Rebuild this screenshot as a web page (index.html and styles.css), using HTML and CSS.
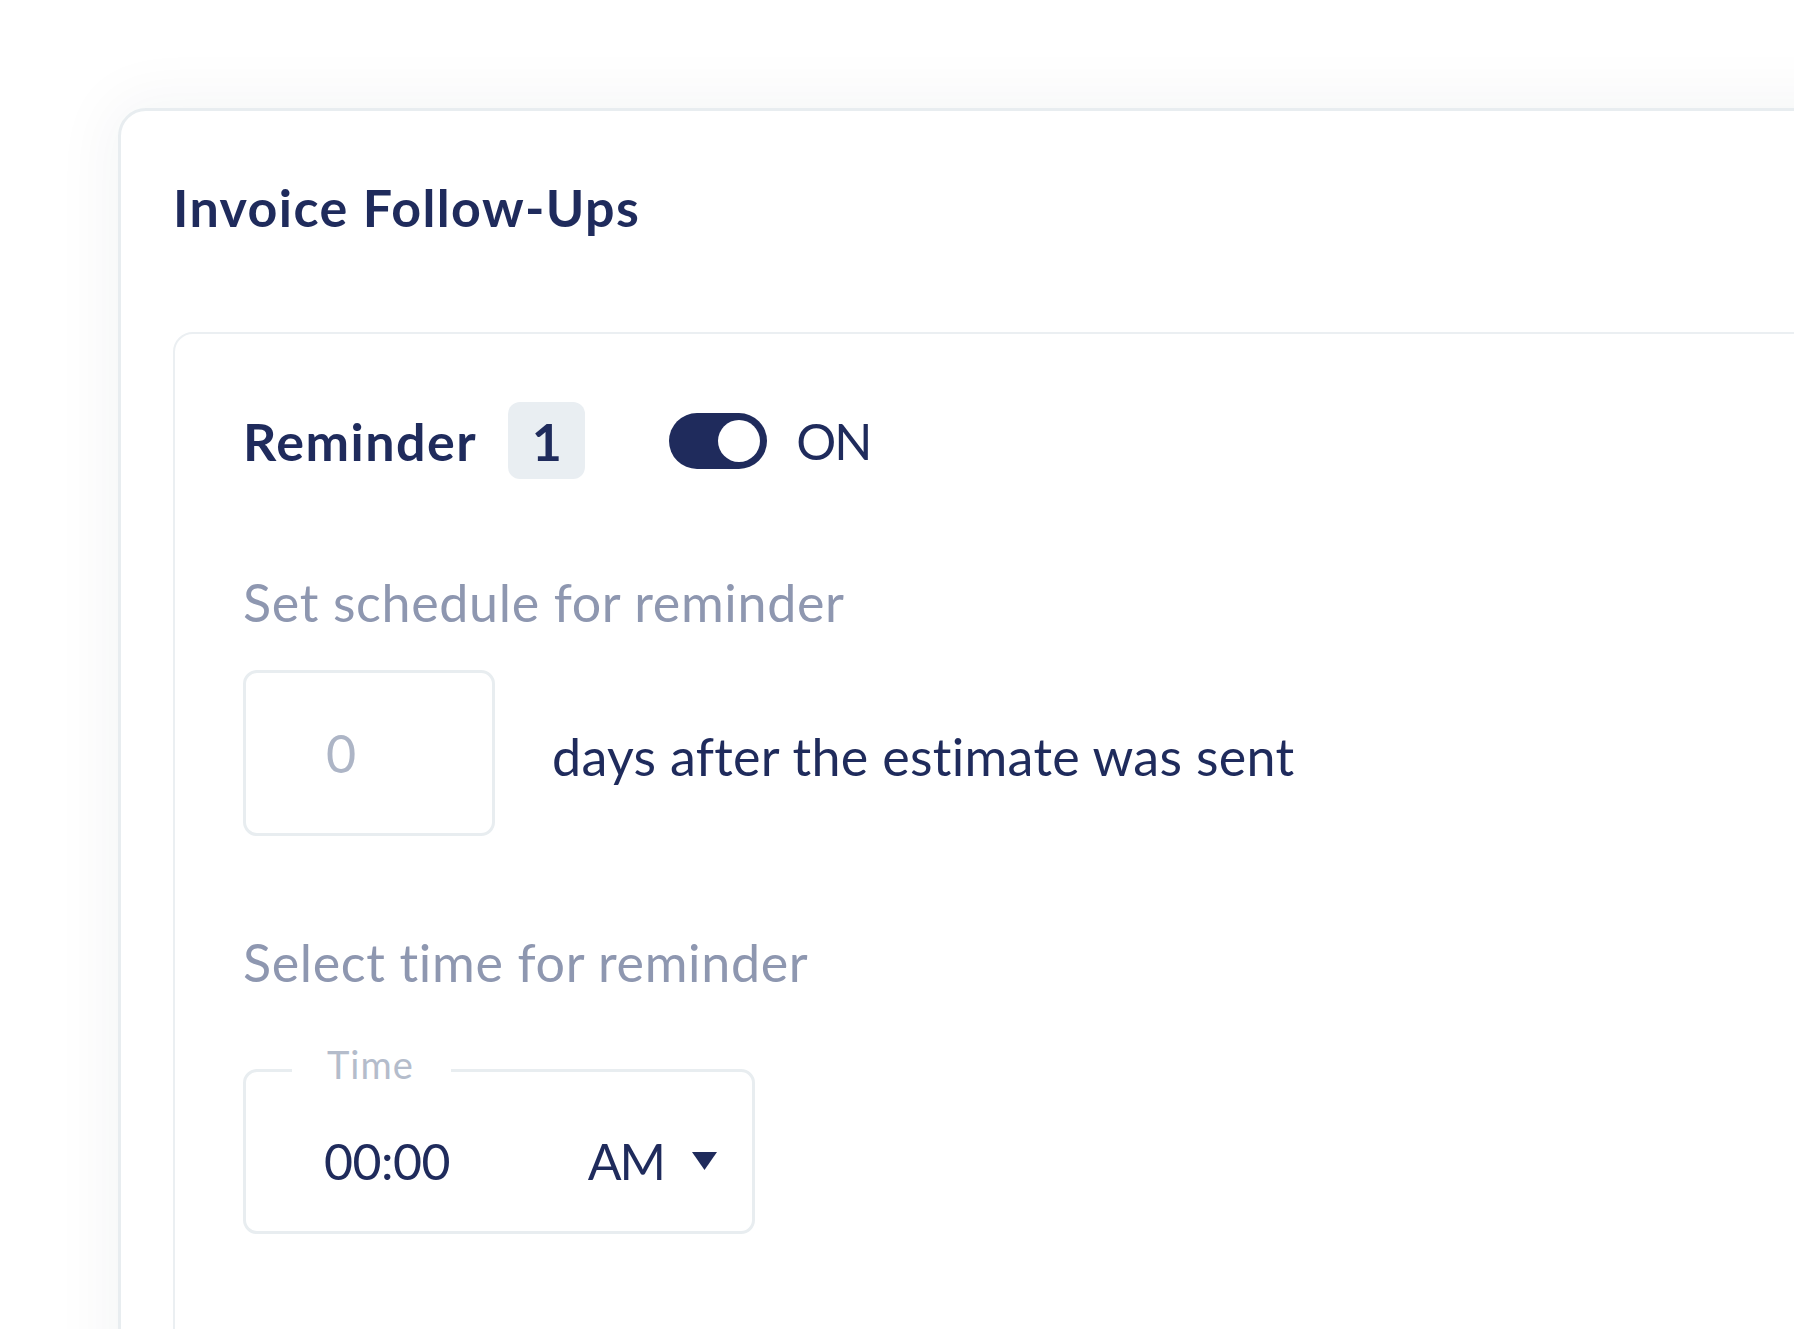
FILE: index.html
```html
<!DOCTYPE html>
<html lang="en">
<head>
    <meta charset="UTF-8">
    <meta name="viewport" content="width=device-width, initial-scale=1.0">
    <title>Invoice Follow-Ups</title>
    <link rel="stylesheet" href="styles.css">
</head>
<body>
    <div class="page">
        <section class="card">
            <h1 class="card-title">Invoice Follow-Ups</h1>

            <!-- Reminder block -->
            <div class="reminder">
                <div class="reminder-head">
                    <span class="reminder-label">Reminder</span>
                    <span class="reminder-num">1</span>
                    <label class="toggle">
                        <span class="toggle-track"><span class="toggle-knob"></span></span>
                        <span class="toggle-text">ON</span>
                    </label>
                </div>

                <p class="field-label">Set schedule for reminder</p>
                <div class="schedule-row">
                    <input class="days-input" type="text" placeholder="0">
                    <span class="schedule-text">days after the estimate was sent</span>
                </div>

                <p class="field-label time-label">Select time for reminder</p>
                <div class="time-field">
                    <span class="time-legend">Time</span>
                    <span class="time-value">00:00</span>
                    <span class="time-period">
                        <span class="time-ampm">AM</span>
                        <svg class="caret" width="25" height="18" viewBox="0 0 25 18"><path d="M0 0H25L12.5 18Z" fill="#1f2b5c"/></svg>
                    </span>
                </div>
            </div>
        </section>
    </div>
</body>
</html>
```

FILE: styles.css
```css
/* General Styles */
* {
    box-sizing: border-box;
}

body {
    margin: 0;
    background: #fff;
    font-family: Lato, "Noto Sans", sans-serif;
    color: #1f2b5c;
}

.page {
    width: 100vw;
    height: 100vh;
    overflow: hidden;
    padding: 108px 0 0 118px;
}

/* Outer card */
.card {
    width: 1800px;
    min-height: 1400px;
    background: #fff;
    border: 3px solid #e8edf0;
    border-radius: 28px;
    padding: 70px 0 0 52px;
    box-shadow: 0 0 60px 12px rgba(30, 45, 80, 0.045);
}

.card-title {
    margin: 0 0 99px;
    font-size: 52px;
    line-height: 52px;
    font-weight: 700;
    letter-spacing: 1.4px;
}

/* Inner reminder card */
.reminder {
    min-height: 1100px;
    border: 2px solid #ebeff2;
    border-radius: 20px;
    padding: 68px 0 0 68px;
}

.reminder-head {
    display: flex;
    align-items: center;
    height: 77px;
}

.reminder-label {
    font-size: 52px;
    line-height: 52px;
    font-weight: 700;
    letter-spacing: 1.5px;
}

.reminder-num {
    display: flex;
    align-items: center;
    justify-content: center;
    width: 77px;
    height: 77px;
    margin-left: 31px;
    border-radius: 12px;
    background: #e9eef2;
    font-size: 52px;
    font-weight: 700;
}

.toggle {
    display: flex;
    align-items: center;
    margin-left: 84px;
}

.toggle-track {
    display: flex;
    justify-content: flex-end;
    align-items: center;
    width: 98px;
    height: 56px;
    padding: 7px;
    border-radius: 28px;
    background: #1f2b5c;
}

.toggle-knob {
    width: 42px;
    height: 42px;
    border-radius: 50%;
    background: #fff;
}

.toggle-text {
    margin-left: 29px;
    font-size: 50px;
    line-height: 52px;
    letter-spacing: -2px;
}

/* Labels */
.field-label {
    margin: 97px 0 0;
    font-size: 52px;
    line-height: 52px;
    letter-spacing: 0.65px;
    color: #8e97b0;
}

.time-label {
    margin-top: 100px;
}

/* Schedule row */
.schedule-row {
    display: flex;
    align-items: center;
    margin-top: 42px;
}

.days-input {
    width: 252px;
    height: 166px;
    padding: 0 0 0 80px;
    border: 3px solid #e8edf0;
    border-radius: 14px;
    font-family: inherit;
    font-size: 52px;
    color: #1f2b5c;
    background: #fff;
    outline: none;
}

.days-input::placeholder {
    color: #adb5c6;
}

.schedule-text {
    margin: 6px 0 0 57px;
    font-size: 52px;
    line-height: 52px;
    letter-spacing: 0.3px;
}

/* Time select */
.time-field {
    position: relative;
    display: flex;
    align-items: center;
    justify-content: space-between;
    width: 512px;
    height: 165px;
    margin-top: 81px;
    padding: 19px 35px 0 78px;
    border: 3px solid #e8edf0;
    border-radius: 14px;
}

.time-legend {
    position: absolute;
    top: -27px;
    left: 46px;
    padding: 0 37px 0 35px;
    background: #fff;
    font-size: 38px;
    line-height: 38px;
    letter-spacing: 1px;
    color: #b4bccb;
}

.time-value,
.time-period {
    font-size: 52px;
    line-height: 52px;
}

.time-value {
    font-size: 50px;
    letter-spacing: -0.5px;
}

.time-period {
    display: flex;
    align-items: center;
    gap: 28px;
}

.time-ampm {
    font-size: 50px;
    letter-spacing: -2px;
}
```
